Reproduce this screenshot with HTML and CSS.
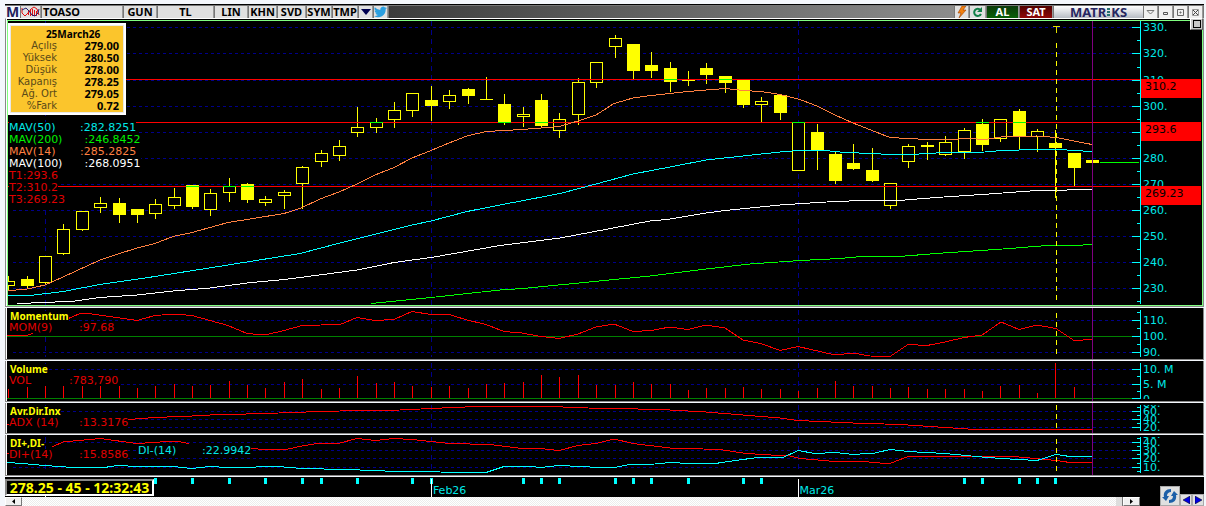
FILE: index.html
```
<!DOCTYPE html>
<html lang="tr">
<head>
    <meta charset="UTF-8">
    <meta name="viewport" content="width=device-width, initial-scale=1.0">
    <title>TOASO - Matriks</title>
    <link rel="stylesheet" href="styles.css">
</head>
<body>
    <header class="toolbar">
        <span class="logo-m">M</span>
        <button type="button" class="tool chart-type" aria-label="Grafik tipi">
            <svg width="19" height="12" viewBox="0 0 19 12">
                <path d="M7.500 5v4M9.500 3v7M11.500 3v7M13.500 4v6M15.500 5v5" stroke="#e01010" stroke-width="1"/>
                <path d="M1 2v5l3 3 3-3 3-4 3-2 3 2 2 6" fill="none" stroke="#e01010"/>
                <path d="M1 4l4-2 3 3 3 4 3 1 3-3 1-4" fill="none" stroke="#202070"/>
            </svg>
        </button>
        <button type="button" class="tool symbol">TOASO</button>
        <button type="button" class="tool period">GUN</button>
        <button type="button" class="tool currency">TL</button>
        <button type="button" class="tool period">LIN</button>
        <button type="button" class="tool mode">KHN</button>
        <button type="button" class="tool mode">SVD</button>
        <button type="button" class="tool short">SYM</button>
        <button type="button" class="tool short">TMP</button>
        <button type="button" class="tool icon" aria-label="Menü">
            <svg width="10" height="6" viewBox="0 0 10 6"><path d="M0 0h10L5 6z" fill="#000050"/></svg>
        </button>
        <button type="button" class="tool icon" aria-label="Twitter">
            <svg width="13" height="12" viewBox="0 0 24 22"><path d="M24 3.500a9 9 0 0 1-2.800.8A5 5 0 0 0 23.300 1.600a9 9 0 0 1-3.100 1.200A4.900 4.900 0 0 0 11.800 7.300 14 14 0 0 1 1.700 2.100a4.900 4.900 0 0 0 1.500 6.600A5 5 0 0 1 1 8.100a4.900 4.900 0 0 0 3.900 4.900 5 5 0 0 1-2.200.1 4.900 4.900 0 0 0 4.600 3.400A10 10 0 0 1 0 18.500 14 14 0 0 0 21.500 6a10 10 0 0 0 2.500-2.500z" fill="#2a9fe0"/></svg>
        </button>
        <span class="filler"></span>
        <button type="button" class="tool icon" aria-label="Hızlı emir">
            <svg width="10" height="12" viewBox="0 0 10 12"><path d="M5 0h4L6 4h3L2 12l2-5H1z" fill="#f08010" stroke="#a04000" stroke-width=".6"/></svg>
        </button>
        <button type="button" class="tool icon wide" aria-label="Yenile">
            <svg width="11" height="11" viewBox="0 0 11 11"><path d="M8.500 3A3.600 3.600 0 1 0 9 7" fill="none" stroke="#108048" stroke-width="2"/><path d="M10 0v5H5z" fill="#108048"/></svg>
        </button>
        <button type="button" class="tool buy">AL</button>
        <button type="button" class="tool sell">SAT</button>
        <a href="#" class="brand">MATR<svg width="5" height="9" viewBox="0 0 5 9"><path d="M2.500 0v9" stroke="#257070" stroke-width="3" stroke-dasharray="2 1"/></svg>KS</a>
        <button type="button" class="tool win" aria-label="Aşağı"><svg width="9" height="5" viewBox="0 0 9 5"><path d="M1 .5h7L4.500 4z" fill="none" stroke="#777"/></svg></button>
        <button type="button" class="tool win" aria-label="Küçült"><svg width="7" height="7" viewBox="0 0 7 7"><path d="M1.500 3.500h4v2h-4z" fill="none" stroke="#555"/></svg></button>
        <button type="button" class="tool win" aria-label="Büyüt"><svg width="7" height="7" viewBox="0 0 7 7"><path d="M.5.5h6v6h-6zM3 3h1v1H3z" fill="none" stroke="#666"/></svg></button>
        <button type="button" class="tool win" aria-label="Kapat"><svg width="7" height="7" viewBox="0 0 7 7"><path d="M.5.5h6v6h-6z" fill="none" stroke="#999"/><path d="M1 1l5 5M6 1L1 6" stroke="#444"/></svg></button>
    </header>

    <main>
        <section class="pane price">
            <svg class="plot" id="pricePlot" height="284" viewBox="8 21 1133 284" preserveAspectRatio="none"></svg>
            <svg class="axis" id="priceAxis" width="61" height="284" viewBox="1141 21 61 284"></svg>
            <table class="quote">
                <caption>25March26</caption>
                <tbody>
                    <tr><th scope="row">Açılış</th><td>279.00</td></tr>
                    <tr><th scope="row">Yüksek</th><td>280.50</td></tr>
                    <tr><th scope="row">Düşük</th><td>278.00</td></tr>
                    <tr><th scope="row">Kapanış</th><td>278.25</td></tr>
                    <tr><th scope="row">Ağ. Ort</th><td>279.05</td></tr>
                    <tr><th scope="row">%Fark</th><td>0.72</td></tr>
                </tbody>
            </table>
            <div class="legend averages">
                <p class="cyan"><span>MAV(50)</span>:282.8251</p>
                <p class="green"><span>MAV(200)</span>:246.8452</p>
                <p class="coral"><span>MAV(14)</span>:285.2825</p>
                <p class="white"><span>MAV(100)</span>:268.0951</p>
                <p class="red">T1:293.6</p>
                <p class="red">T2:310.2</p>
                <p class="red">T3:269.23</p>
            </div>
            <button type="button" class="maximize" aria-label="Paneli büyüt"></button>
        </section>

        <section class="pane">
            <svg class="plot" id="momPlot" height="51" viewBox="7 308 1134 51" preserveAspectRatio="none"></svg>
            <svg class="axis" id="momAxis" width="62" height="51" viewBox="1141 308 62 51"></svg>
            <div class="legend">
                <h2>Momentum</h2>
                <p class="red"><span>MOM(9)</span>:97.68</p>
            </div>
        </section>

        <section class="pane">
            <svg class="plot" id="volPlot" height="40" viewBox="7 361 1134 40" preserveAspectRatio="none"></svg>
            <svg class="axis" id="volAxis" width="62" height="40" viewBox="1141 361 62 40"></svg>
            <div class="legend volume">
                <h2>Volume</h2>
                <p class="red"><span>VOL</span>:783,790</p>
            </div>
        </section>

        <section class="pane">
            <svg class="plot" id="adxPlot" height="30" viewBox="7 403 1134 30" preserveAspectRatio="none"></svg>
            <svg class="axis" id="adxAxis" width="62" height="30" viewBox="1141 403 62 30"></svg>
            <div class="legend">
                <h2>Avr.Dir.Inx</h2>
                <p class="red"><span>ADX (14)</span>:13.3176</p>
            </div>
        </section>

        <section class="pane">
            <svg class="plot" id="diPlot" height="40" viewBox="7 435 1134 40" preserveAspectRatio="none"></svg>
            <svg class="axis" id="diAxis" width="62" height="40" viewBox="1141 435 62 40"></svg>
            <div class="legend">
                <h2>DI+,DI-</h2>
                <p class="red"><span>DI+(14)</span>:15.8586</p>
            </div>
            <div class="legend second">
                <p class="cyan"><span>DI-(14)</span>:22.9942</p>
            </div>
        </section>
    </main>

    <footer class="footer">
        <div class="timeline-col">
            <div class="timeline">
                <svg class="plot" id="timePlot" height="20" viewBox="5 477 1135 20" preserveAspectRatio="none"></svg>
                <span class="month feb">Feb26</span>
                <span class="month mar">Mar26</span>
                <output class="last">278.25 - 45 - 12:32:43</output>
            </div>
            <div class="scroll">
                <button type="button" class="scroll-btn" aria-label="Sola kaydır"><svg width="3" height="5" viewBox="0 0 3 5"><path d="M3 0v5L0 2.500z"/></svg></button>
                <span class="track"></span>
                <span class="thumb"></span>
                <button type="button" class="scroll-btn" aria-label="Sağa kaydır"><svg width="3" height="5" viewBox="0 0 3 5"><path d="M0 0v5l3-2.500z"/></svg></button>
            </div>
        </div>
        <div class="nav">
            <button type="button" class="nav-btn sync" aria-label="Eşitle">
                <svg width="16" height="16" viewBox="0 0 16 16"><path d="M9 1C4 1 1 4 2 9H0l4 4 3-5H5c0-3 2-4 4-4z" fill="#1c5fa8"/><path d="M7 15c5 0 8-3 7-8h2l-4-4-3 5h2c0 3-2 4-4 4z" fill="#1c5fa8"/></svg>
            </button>
            <button type="button" class="nav-btn" aria-label="Geri"><svg width="7" height="8" viewBox="0 0 7 8"><path d="M7 0v8L0 4z" fill="#0000e0" stroke="#000" stroke-width=".5"/></svg></button>
            <button type="button" class="nav-btn" aria-label="İleri"><svg width="7" height="8" viewBox="0 0 7 8"><path d="M0 0v8l7-4z" fill="#0000e0" stroke="#000" stroke-width=".5"/></svg></button>
        </div>
    </footer>
    <script src="chart.js"></script>
</body>
</html>
```

FILE: styles.css
```
* {
    box-sizing: border-box;
}
body {
    margin: 0;
    padding: 4px 2px 0 5px;
    background: #f4f7fc;
    font-family: "DejaVu Sans", Verdana, sans-serif;
    font-size: 11px;
    overflow: hidden;
}
svg {
    display: block;
    flex: none;
}
button {
    padding: 0;
    margin: 0;
    border: 0;
    font: inherit;
    color: inherit;
}
p, h2 {
    margin: 0;
}

/* toolbar */
.toolbar {
    display: flex;
    gap: 1px;
    height: 14px;
    padding-top: 1px;
    padding-right: 1px;
    border-top: 1px solid #000;
    background: #777;
    font: bold 11px/12px "Noto Sans", Tahoma, sans-serif;
    color: #000;
}
.tool {
    display: flex;
    align-items: center;
    justify-content: center;
    height: 12px;
    background: #e0e0e0;
    border-right: 1px solid #999;
}
.logo-m {
    width: 15px;
    background: #f4f7fc;
    color: #22225a;
    font-size: 14px;
    text-align: center;
}
.chart-type { width: 20px; }
.symbol {
    width: 81px;
    padding-left: 1px;
    justify-content: flex-start;
}
.period { width: 33px; }
.currency { width: 56px; }
.mode { width: 28px; }
.short { width: 25px; }
.icon { width: 14px; }
.wide { width: 16px; }
.filler {
    flex: 1;
    background: linear-gradient(90deg, #3c3c3c, #555 30%, #8c8c8c);
}
.buy {
    width: 32px;
    background: linear-gradient(#0a3a0a, #086008);
    color: #fff;
}
.sell {
    width: 33px;
    background: linear-gradient(#500000, #900808);
    color: #fff;
}
.brand {
    display: flex;
    align-items: center;
    justify-content: center;
    width: 89px;
    background: linear-gradient(#fff, #b8bcc4);
    color: #262660;
    font-size: 13px;
    text-decoration: none;
}
.win {
    width: 14px;
    background: #f0f0f0;
}

/* chart panes */
.pane {
    position: relative;
    display: flex;
    padding-left: 1px;
    margin-bottom: 1px;
    background: #000;
    border: 1px solid #888;
    border-top: 0;
    box-shadow: inset 1px 0 #fff;
}
.price {
    padding: 2px 1px 1px 2px;
    border-top: 1px solid #fff;
}
.price::after {
    content: "";
    position: absolute;
    inset: 1px 0 0 1px;
    border: 1px solid #80ff80;
    pointer-events: none;
}
.plot {
    flex: 1;
    min-width: 0;
    shape-rendering: crispEdges;
}
.axis {
    shape-rendering: crispEdges;
    font-size: 11px;
}
.axis text {
    fill: #00e8e8;
}
.axis .tag-text {
    fill: #000;
}
.legend {
    position: absolute;
    left: 3px;
    top: 3px;
    line-height: 11px;
    white-space: nowrap;
}
.legend p {
    width: max-content;
    background: #000;
}
.legend h2 {
    width: max-content;
    padding-left: 1px;
    background: #000;
    color: #ffff00;
    font: bold 10px/11px "Noto Sans", Tahoma, sans-serif;
}
.legend span {
    display: inline-block;
    min-width: 70px;
}
.volume span { min-width: 60px; }
.averages {
    top: 103px;
    line-height: 12px;
}
.averages span {
    min-width: 71px;
    padding-right: 22px;
}
.second {
    left: 132px;
    top: 10px;
}
.second span { min-width: 64px; }
.cyan { color: #00e8e8; }
.green { color: #00f000; }
.coral { color: #ff8040; }
.white { color: #fff; }
.red { color: #e00000; }

.quote {
    position: absolute;
    z-index: 1;
    left: 2px;
    top: 4px;
    width: 118px;
    padding: 2px 5px 1px 3px;
    border: 2px solid #fff;
    background: #fbc52c;
    box-shadow: inset 0 0 0 1px #e8e8e8;
    border-spacing: 0;
    line-height: 12px;
}
/* the caption sits on the empty first line of the box */
.quote caption {
    position: relative;
    height: 17px;
    padding: 5px 0 0 12px;
    margin-bottom: -17px;
    font: bold 10px/12px "Noto Sans", Tahoma, sans-serif;
    text-align: center;
}
.quote tbody::before {
    content: "";
    display: table-row;
    height: 13px;
}
.quote th {
    width: 44px;
    padding: 0;
    font-size: 10px;
    font-weight: normal;
    text-align: right;
    color: #5a4a18;
}
.quote td {
    padding: 0;
    font: bold 11px/12px "Noto Sans", Tahoma, sans-serif;
    text-align: right;
}
.maximize {
    position: absolute;
    z-index: 1;
    right: 0;
    top: -1px;
    width: 13px;
    height: 12px;
    background: #c8c8c8;
    border: 1px solid;
    border-color: #fff #666 #666 #fff;
}
.maximize::before {
    content: "";
    display: block;
    width: 6px;
    height: 6px;
    margin: auto;
    border: 1px solid #000;
}

/* time line, scroll bar, navigation */
.footer {
    display: flex;
    background: #000;
}
.timeline-col {
    flex: 1;
    min-width: 0;
}
.timeline {
    position: relative;
    display: flex;
}
.month {
    position: absolute;
    top: 7px;
    line-height: 13px;
    color: #00e8e8;
}
.feb { left: 37.7%; }
.mar { left: 70%; }
.last {
    position: absolute;
    left: 0;
    top: 2px;
    width: 149px;
    border: 2px solid;
    border-color: #888 #fff #fff #888;
    background: #000;
    color: #ffff00;
    font: bold 14px/13px "Noto Sans", Verdana, sans-serif;
    text-align: center;
    white-space: nowrap;
}
.scroll {
    display: flex;
    height: 9px;
    background: #f6f6f6;
}
.track {
    flex: 1;
    background: repeating-conic-gradient(#ececec 0 25%, #fff 0 50%) 0 0 / 2px 2px;
}
.thumb {
    width: 7px;
    background: #ddd;
    border-right: 1px solid #777;
}
.scroll-btn {
    display: flex;
    align-items: center;
    justify-content: center;
    width: 17px;
    background: #f0f0f0;
    border: 1px solid;
    border-color: #fff #777 #777 #fff;
}
.nav {
    display: flex;
    align-items: flex-end;
    justify-content: flex-end;
    width: 64px;
}
.nav-btn {
    display: flex;
    align-items: center;
    justify-content: center;
    width: 12px;
    height: 12px;
    background: #e0e0e0;
    border: 1px solid #aaa;
}
.sync {
    width: 20px;
    height: 20px;
}
```

FILE: chart.js
```
const NS = 'http://www.w3.org/2000/svg';
const GRID = '#00008b';
const AXIS = '#00ffff';
const months = [45, 431, 798];

function add(id, tag, attrs, text) {
    const el = document.createElementNS(NS, tag);
    for (const key in attrs) el.setAttribute(key, attrs[key]);
    if (text) el.textContent = text;
    document.getElementById(id).appendChild(el);
}

function rect(id, x, y, width, height, fill) {
    add(id, 'rect', { x, y, width, height, fill });
}

function line(id, x1, y1, x2, y2, stroke, dash) {
    const attrs = { x1, y1, x2, y2, stroke };
    if (dash) attrs['stroke-dasharray'] = dash;
    add(id, 'line', attrs);
}

function curve(id, points, stroke) {
    add(id, 'polyline', { points, stroke, fill: 'none' });
}

// column of the nth trading day
function dayX(i) {
    return Math.floor(8.8 + 18.37 * i);
}

function grid(id, top, bottom, levels) {
    levels.forEach(y => line(id, 13, y + 0.5, 1132, y + 0.5, GRID, '3 3'));
    months.forEach(x => line(id, x + 0.5, top, x + 0.5, bottom, GRID, '5 4'));
}

function scale(plot, axis, top, bottom, levels, minor, labels) {
    rect(plot, 1140, top, 1, bottom - top, AXIS);
    levels.forEach(y => rect(plot, 1132, y, 8, 1, AXIS));
    minor.forEach(y => rect(plot, 1137, y, 3, 1, AXIS));
    labels.forEach(([text, y]) => add(axis, 'text', { x: 1143, y: y + 4 }, text));
}

function cursors(id, top, bottom, dashTop) {
    rect(id, 1092, top, 1, bottom - top, '#800080');
    if (dashTop) line(id, 1056.5, dashTop, 1056.5, bottom - 1, '#ffff00', '5 4');
}

// price pane: [high, body top, body bottom, low, filled]
const candles = [
    [276, 281, 286, 290, 0], [276, 279, 286, 288, 1], [256, 256, 283, 284, 0], [224, 229, 254, 255, 0],
    [211, 211, 230, 231, 0], [197, 203, 208, 213, 0], [198, 203, 215, 223, 1], [209, 209, 215, 223, 1],
    [199, 204, 214, 219, 0], [188, 197, 206, 209, 0], [185, 185, 207, 209, 1], [189, 193, 210, 216, 0],
    [178, 186, 193, 202, 0], [183, 184, 200, 203, 1], [196, 199, 203, 206, 0], [190, 192, 196, 209, 0],
    [166, 167, 184, 209, 0], [150, 153, 162, 167, 0], [140, 146, 156, 161, 0], [107, 127, 133, 137, 0],
    [118, 122, 128, 133, 0], [102, 110, 120, 128, 0], [93, 93, 111, 117, 0], [86, 100, 106, 121, 1],
    [90, 95, 102, 109, 0], [88, 89, 96, 104, 1], [77, 99, 100, 100, 1], [94, 104, 123, 125, 1],
    [107, 114, 117, 127, 0], [94, 100, 126, 128, 1], [113, 119, 131, 138, 0], [78, 82, 115, 125, 0],
    [62, 62, 83, 88, 0], [35, 38, 47, 58, 0], [44, 44, 71, 80, 1], [52, 65, 71, 78, 1],
    [62, 68, 82, 92, 1], [71, 80, 81, 86, 1], [63, 68, 75, 84, 1], [76, 76, 83, 93, 1],
    [79, 80, 105, 108, 1], [97, 101, 105, 122, 0], [95, 95, 113, 120, 1], [122, 122, 171, 171, 0],
    [124, 132, 150, 170, 1], [151, 154, 181, 184, 1], [144, 163, 169, 170, 1], [148, 170, 181, 182, 1],
    [183, 183, 206, 209, 0], [144, 146, 162, 168, 0], [142, 145, 147, 160, 1], [136, 142, 155, 156, 0],
    [128, 130, 152, 159, 0], [119, 124, 145, 151, 1], [119, 119, 139, 142, 0], [109, 111, 136, 150, 1],
    [129, 131, 137, 152, 0], [130, 143, 148, 198, 1], [153, 153, 168, 186, 1], [156, 160, 163, 164, 1]
];
const alarms = [[79, '310.2'], [122, '293.6'], [186, '269.23']];
const priceLevels = [27, 53, 80, 106, 132, 158, 184, 210, 236, 262, 288];

grid('pricePlot', 21, 305, priceLevels);
candles.forEach(([high, top, bottom, low, filled], i) => {
    const x = dayX(i);
    rect('pricePlot', x, high, 1, top - high, '#ffff00');
    rect('pricePlot', x, bottom, 1, low - bottom, '#ffff00');
    if (filled) rect('pricePlot', x - 6, top, 13, bottom - top, '#ffff00');
    else add('pricePlot', 'rect', { x: x - 5.5, y: top + 0.5, width: 12, height: bottom - top - 1, fill: '#000', stroke: '#ffff00' });
});
alarms.forEach(([y]) => rect('pricePlot', 8, y, 1132, 1, '#ff0000'));
[[10, 186], [12, 186], [13, 186], [20, 122], [27, 122], [29, 122], [36, 79], [39, 79], [43, 122], [53, 122], [55, 122]]
    .forEach(([i, y]) => rect('pricePlot', dayX(i) - 6, y, 13, 1, '#00ff00'));
curve('pricePlot', '8,290.5 25,289.5 45,285 63,277 100,260 118,254 137,248 155,243.5 173,236.5 192,232.5 228,222.5 247,219.5 284,213.5 300,208.5 320,199 339,192 357,184 375,175 394,167.5 412,158 431,150.5 449,143 467,136 486,131.5 522,129.5 541,128 559,126.5 578,121 596,115 614,103.5 633,98 651,95.5 688,91.5 725,88.5 743,90.5 761,91.5 780,94.5 800,99.5 817,106 835,115 853,123 872,130.5 890,137.5 927,139.5 950,139.5 969,138.5 985,139.5 1001,137 1037,136 1056,137.5 1074,141 1092,144.5', '#ff8040');
curve('pricePlot', '8,295.5 30,295.5 63,291.5 100,284.5 155,276.5 228,265 300,253.5 340,243 412,225 431,221 467,211.5 500,205 560,193.5 596,184 633,174 670,167 706,160 743,156 780,152 798,150.5 825,150.5 845,152.5 872,153.5 890,154.5 910,154.5 945,152.5 985,152 1001,150.5 1037,149.5 1060,149.5 1074,150.5 1092,151.5', '#00ffff');
curve('pricePlot', '17,303.5 45,302.5 75,301 100,297.5 137,295 173,291 210,288 247,283 284,279.5 300,277.5 357,270 394,262.5 431,257.5 500,245.5 560,238 600,230.5 650,221 667,219.5 706,213 725,210.5 780,205 810,203 835,201.5 863,200.5 899,200.5 936,197.5 982,194.5 1037,190.5 1060,190.5 1074,189.5 1092,189.5', '#ffffff');
curve('pricePlot', '371,303.5 431,297.5 500,290 523,288.5 650,276 706,269 750,264 800,260.5 840,258.5 862,256.5 899,256.5 936,253.5 1010,248.5 1047,245.5 1075,245.5 1092,244.5', '#00ff00');
cursors('pricePlot', 21, 305, 43);
rect('pricePlot', 1053, 26, 7, 1, '#e0e000');
rect('pricePlot', 1056, 26, 1, 7, '#e0e000');
rect('pricePlot', 1100, 162, 39, 1, '#00ff00');
scale('pricePlot', 'priceAxis', 21, 304, priceLevels,
    [40, 67, 93, 119, 145, 171, 197, 223, 249, 275, 301],
    priceLevels.map((y, i) => [(330 - i * 10) + '.', y]));
alarms.forEach(([y, text]) => {
    rect('priceAxis', 1141, y, 60, 19, '#ff0000');
    add('priceAxis', 'text', { x: 1145, y: y + 11, class: 'tag-text' }, text);
});

// momentum
grid('momPlot', 310, 357, [320, 352]);
rect('momPlot', 7, 336, 1133, 1, '#008000');
curve('momPlot', '7,335.5 27,335.5 65,320 80,313.5 92,314 110,316.5 137,320.5 155,315.5 175,314 192,315.5 210,320.5 228,325.5 247,333.5 265,335 284,330.5 302,325.5 340,324.5 357,317.5 375,320.5 394,319.5 412,311.5 431,314.5 449,314.5 467,320 486,324.5 504,331.5 522,333 541,336.5 559,338.5 578,334 596,327 614,324 633,331.5 651,330.5 670,327 688,329.5 706,325 725,328 743,340 761,343.5 780,350.5 798,346.5 835,355 853,353 870,356 890,356.5 908,344.5 927,345.5 945,342 964,337.5 982,335 1001,322 1019,329.5 1037,325 1056,328.5 1074,340.5 1092,339.5', '#ff0000');
cursors('momPlot', 308, 359, 313);
scale('momPlot', 'momAxis', 310, 357, [320, 336, 352], [312, 328, 344], [['110.', 320], ['100.', 336], ['90.', 352]]);

// volume
const volume = [389, 387, 386, 386, 386, 386, 386, 388, 386, 384, 386, 385, 381, 385, 388, 382, 379, 389, 388, 376,
    383, 382, 386, 387, 386, 388, 384, 383, 382, 375, 377, 375, 385, 385, 382, 384, 384, 390, 388, 388,
    387, 389, 389, 391, 388, 381, 386, 386, 388, 387, 389, 389, 389, 391, 386, 385, 393, 363, 387];
grid('volPlot', 363, 398, [369, 384]);
volume.forEach((y, i) => rect('volPlot', dayX(i), y, 1, 398 - y, '#ff0000'));
rect('volPlot', 7, 398, 1133, 1, '#008000');
cursors('volPlot', 361, 401);
scale('volPlot', 'volAxis', 363, 399, [369, 384, 398], [376, 391], [['10. M', 369], ['5. M', 384], ['0', 399]]);
rect('volAxis', 1141, 399, 62, 2, '#000');

// ADX
grid('adxPlot', 405, 431, [411, 419, 427]);
curve('adxPlot', '7,424.5 128,419.5 155,417.5 192,416 210,415 265,413.5 320,411.5 360,410.5 400,410 431,408.5 477,406.5 550,406.5 588,408 622,408.5 670,410 706,412 743,415 780,418 798,420.5 853,423 900,424.5 945,427.5 975,429.5 1092,429.5', '#ff0000');
cursors('adxPlot', 403, 433, 405);
scale('adxPlot', 'adxAxis', 405, 431, [411, 419, 427], [407, 415, 423], [['80.', 403], ['60.', 411], ['40.', 419], ['20.', 427]]);
rect('adxAxis', 1141, 403, 62, 2, '#000');

// DI+ / DI-
grid('diPlot', 437, 473, [442, 450, 458, 467]);
curve('diPlot', '7,453.5 15,453.5', '#ff0000');
curve('diPlot', '52,447 63,442 100,438.5 137,443.5 175,441 189,443.5', '#ff0000');
curve('diPlot', '251,448.5 265,449.5 286,449.5 302,446 320,443 340,443 357,438.5 375,440.5 394,438.5 412,439.5 431,441.5 449,443.5 490,444.5 522,448.5 545,449 559,450.5 578,445.5 596,443.5 614,439 633,443.5 670,448 720,449.5 743,453 761,454.5 790,456 800,458.5 835,461.5 864,461.5 880,463 890,463.5 908,456.5 927,457 980,456.5 1019,457 1040,459 1056,460.5 1070,462.5 1092,462.5', '#ff0000');
curve('diPlot', '7,462.5 22,463.5 45,465.5 73,467.5 104,467.5 118,465.5 137,466.5 173,466.5 192,468.5 210,466.5 228,467.5 247,467.5 265,466.5 284,467 302,468.5 345,469.5 375,470.5 394,471.5 440,472 486,472.5 504,466.5 530,466.5 541,467.5 559,465.5 590,467 617,467 630,464.5 655,464 670,462.5 690,463.5 715,463.5 743,459.5 761,457 782,458 798,450.5 815,453.5 835,452.5 853,454.5 875,453 890,449.5 908,451.5 945,453.5 982,457 1001,458.5 1019,459.5 1037,460.5 1056,454.5 1070,456.5 1092,456.5', '#00ffff');
cursors('diPlot', 435, 475, 439);
scale('diPlot', 'diAxis', 437, 473, [442, 450, 458, 467], [438, 446, 454, 463, 471], [['50.', 434], ['40.', 442], ['30.', 450], ['20.', 458], ['10.', 467]]);
rect('diAxis', 1141, 435, 62, 2, '#000');

// news marks and month separators
[8, 10, 12, 14, 16, 17, 19, 22, 23, 28, 29, 30, 33, 34, 35, 37, 40, 41, 52, 53, 55, 56, 57]
    .forEach(i => rect('timePlot', dayX(i) - 1, 478, 3, 6, '#00ffff'));
rect('timePlot', 45, 495, 1, 2, '#ffffff');
rect('timePlot', 431, 479, 1, 18, '#ffffff');
rect('timePlot', 798, 479, 1, 18, '#ffffff');
```
